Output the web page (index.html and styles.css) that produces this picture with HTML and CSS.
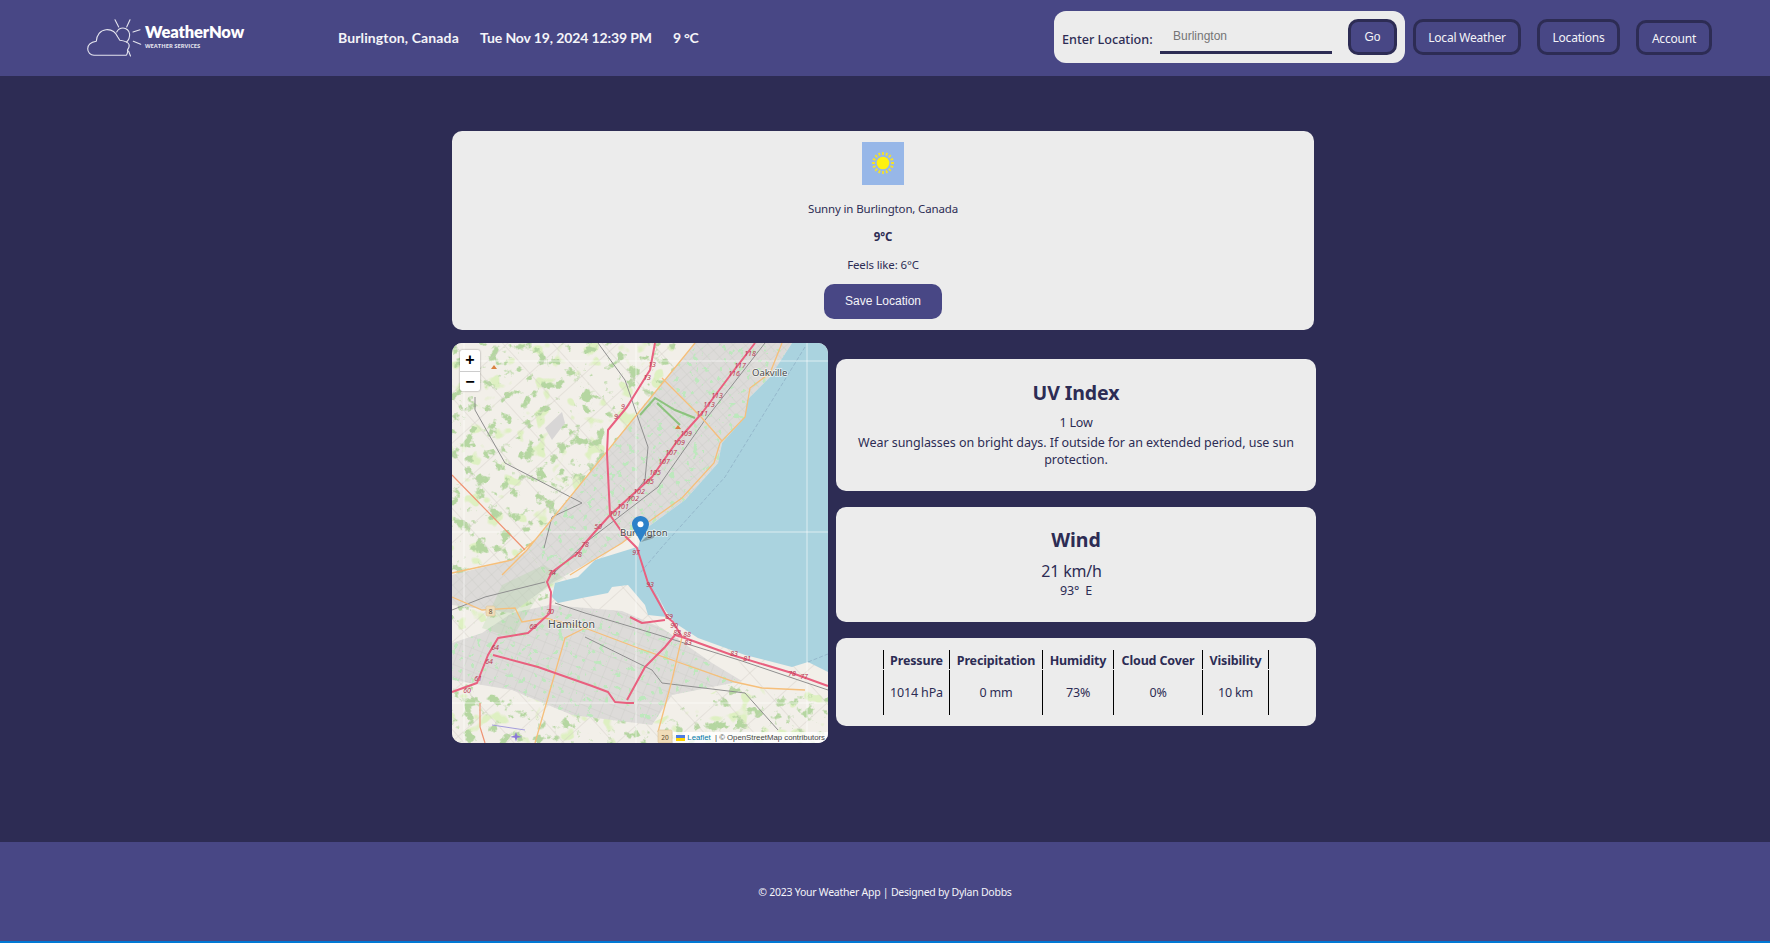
FILE: index.html
```html
<!DOCTYPE html>
<html lang="en">
<head>
<meta charset="utf-8">
<title>WeatherNow</title>
<link rel="stylesheet" href="styles.css">
</head>
<body>
<header class="topbar">
  <a class="logo">
    <svg class="logo-mark" viewBox="16 10 58 40" width="58" height="40" aria-hidden="true">
      <path d="M56 48.300H24c-3.600 0-6.300-3-6.300-6.600 0-3.700 3.300-6.600 8.600-7.500.4-6 3.900-11 9.700-11.500 5.600-.5 9.800 2.800 11.800 7.300l2 3.300c3.500.4 8.300 1.800 9.300 4.300.6 2-.6 3.900-1.700 5.500 1 2-1 5.200-1.400 5.200z" class="logo-line"/>
      <path d="M46.700 25c1.300-2.600 3.800-4 6.300-4 3.400 0 6.300 2.600 6.600 6 .2 3-.8 5.900-3 8" class="logo-line"/>
      <path d="M45 12.700l3.700 7.300M60 12.700l-3.300 7.300M70 22.700l-7 2.300M70.700 37.300l-7.400-3M58.500 44l2 5" class="logo-line"/>
    </svg>
    <span class="logo-text"><strong>WeatherNow</strong><small>WEATHER SERVICES</small></span>
  </a>
  <div class="now">
    <span class="now-place">Burlington, Canada</span>
    <span class="now-date">Tue Nov 19, 2024 12:39 PM</span>
    <span class="now-temp">9 °C</span>
  </div>
  <form class="search">
    <label class="search-label" for="loc">Enter Location:</label>
    <input class="search-input" id="loc" type="text" placeholder="Burlington">
    <button class="btn btn-go" type="button">Go</button>
  </form>
  <nav class="nav">
    <button class="btn btn-nav btn-local" type="button">Local Weather</button>
    <button class="btn btn-nav btn-locs" type="button">Locations</button>
    <button class="btn btn-nav btn-acct" type="button">Account</button>
  </nav>
</header>

<main class="main">
  <div class="wrap">
    <section class="card current">
      <svg class="wx-icon" viewBox="0 0 42 43" width="42" height="43" aria-hidden="true">
        <rect width="42" height="43" class="wx-sky"/>
        <path class="wx-rays" d="M21 10v3M21 29v3M10 21h3M29 21h3M13.200 13.200l2.100 2.100M26.700 26.700l2.100 2.100M28.800 13.200l-2.100 2.100M15.300 26.700l-2.100 2.100M16.800 10.800l1.100 2.800M24.100 28.400l1.100 2.800M25.200 10.800l-1.100 2.800M17.900 28.400l-1.100 2.800M10.800 16.800l2.800 1.100M28.400 24.100l2.800 1.100M31.200 16.800l-2.800 1.100M13.600 24.100l-2.800 1.100"/>
        <circle cx="21" cy="21" r="6.300" class="wx-sun"/>
      </svg>
      <p class="cur-line cur-desc">Sunny in Burlington, Canada</p>
      <p class="cur-line cur-temp">9°C</p>
      <p class="cur-line cur-feels">Feels like: 6°C</p>
      <button class="save" type="button">Save Location</button>
    </section>

    <div class="row">
      <div class="map">
        <svg class="map-art" viewBox="0 0 376 400" width="376" height="400" aria-hidden="true">
          <defs>
            <filter id="blotch" x="0" y="0" width="100%" height="100%" color-interpolation-filters="sRGB">
              <feTurbulence type="fractalNoise" baseFrequency="0.085" numOctaves="4" seed="11"/>
              <feColorMatrix values="0 0 0 0 .71  0 0 0 0 .84  0 0 0 0 .63  9 0 0 0 -5.250"/>
            </filter>
            <filter id="speck" x="0" y="0" width="100%" height="100%" color-interpolation-filters="sRGB">
              <feTurbulence type="fractalNoise" baseFrequency="0.17" numOctaves="3" seed="4"/>
              <feColorMatrix values="0 0 0 0 .74  0 0 0 0 .91  0 0 0 0 .74  14 0 0 0 -8.900"/>
            </filter>
            <filter id="lime" x="0" y="0" width="100%" height="100%" color-interpolation-filters="sRGB">
              <feTurbulence type="fractalNoise" baseFrequency="0.06" numOctaves="2" seed="23"/>
              <feColorMatrix values="0 0 0 0 .87  0 0 0 0 .94  0 0 0 0 .76  12 0 0 0 -7.400"/>
            </filter>
            <filter id="soft"><feGaussianBlur stdDeviation="0.35"/></filter>
            <pattern id="rural" width="37" height="37" patternUnits="userSpaceOnUse" patternTransform="rotate(-42)">
              <path d="M0 0H37M0 0V37" class="grid-rural"/>
            </pattern>
            <pattern id="streets" width="9" height="9" patternUnits="userSpaceOnUse" patternTransform="rotate(-42)">
              <rect width="9" height="9" class="urban-fill"/>
              <path d="M0 0H9M0 0V9" class="grid-street"/>
            </pattern>
            <pattern id="streets2" width="11" height="11" patternUnits="userSpaceOnUse" patternTransform="rotate(22)">
              <rect width="11" height="11" class="urban-fill"/>
              <path d="M0 0H11M0 0V11" class="grid-street"/>
            </pattern>
            <clipPath id="clip-rural"><path d="M0 0H243L75 207 110 250 0 290zM0 340L60 345 120 370 200 380 280 340 376 350V400H0z"/></clipPath>
            <clipPath id="clip-city"><path d="M75 207L243 0H340L318 34 295 57 293 74 270 100 266 120 233 157 196 184 150 212 100 240zM0 300L30 290 60 270 98 262 170 268 210 285 260 320 290 338 220 352 200 382 120 372 60 347 0 337z"/></clipPath>
          </defs>
          <g filter="url(#soft)">
            <rect width="376" height="400" class="land"/>
            <rect width="376" height="400" filter="url(#lime)" clip-path="url(#clip-rural)"/>
            <rect width="376" height="400" filter="url(#blotch)" clip-path="url(#clip-rural)"/>
            <rect width="376" height="400" fill="url(#rural)"/>
            <path d="M75 207L243 0H340L318 34 295 57 293 74 270 100 266 120 233 157 196 184 150 212 100 240z" fill="url(#streets)"/>
            <path d="M0 300L30 290 60 270 98 262 170 268 210 285 260 320 290 338 220 352 200 382 120 372 60 347 0 337z" fill="url(#streets2)"/>
            <path d="M0 232L60 217 75 207 100 240 60 270 0 262z" fill="url(#streets)"/>
            <rect width="376" height="400" filter="url(#speck)" clip-path="url(#clip-city)"/>
            <path d="M60 295L88 250 112 235 92 222 50 242 30 285z" class="green-dark"/>
            <path d="M188 72L203 55 223 67 243 75M228 82L205 60" class="green-deep"/>
            <path d="M93 85L110 69 113 80 100 97z" class="field-grey"/>
            <path d="M340 0H376V329L356 319 340 324 293 312 246 295 223 280 213 267 185 210 188 197 196 184 233 157 266 120 270 100 293 74 295 57 318 34z" class="water"/>
            <path d="M185 204L143 217 126 234 103 240 100 254 106 260 130 255 156 250 160 244 176 242 193 262 196 272 215 274z" class="water"/>
            <path d="M353 4L273 134 210 204 188 230M356 319L376 311" class="ship"/>
            <path d="M12 0V400M184 0V400M355 0V400M0 18H376M0 189H376M0 360H376" class="seams"/>
          </g>
          <g filter="url(#soft)">
            <path d="M313 0L253 77 206 144 133 200 100 232M103 260L133 270 200 290 290 318 376 347M146 0L173 37 196 104 193 137 175 160M0 267L33 254 93 239M23 54V67L53 120 130 160 100 174 92 205M133 294L200 327 210 340 293 350 326 387" class="rail"/>
            <path d="M243 0L75 207 50 232M0 230L60 217 83 197M0 254L30 267 63 265 70 279 93 275 133 285 186 305 283 339 310 345 353 347M83 400L113 295 133 285M206 389L220 337 230 294M330 0L318 30 298 45 293 74 268 100 262 120 230 155 195 180 170 200 145 215 118 232M210 35L250 75 270 98" class="primary"/>
            <path d="M0 132L73 207M28 360V384L33 400" class="trunk"/>
            <path d="M303 0L280 30 250 70 226 97 200 134 158 172 133 200 126 210 100 229 95 239 99 249 98 270 76 290 46 295 36 312 25 340 0 349M203 0L198 27 175 64 156 87 155 110 158 172 172 192 185 205 196 240 215 274 221 279 230 294 280 312 340 330 376 343M41 312L86 324 140 343 156 349 163 359 175 360 182 360M175 357L193 324 213 304 223 292 230 294M178 274L190 280 213 277" class="motorway"/>
            <path d="M40 382L73 387" class="runway"/>
          </g>
          <path d="M39 26l3-4 3 4zM223 86l3-4 3 4z" class="peak"/>
          <g class="exits">
            <text x="298" y="13">118</text><text x="288" y="25">117</text><text x="282" y="33">116</text><text x="265" y="55">113</text><text x="257" y="64">113</text><text x="250" y="73">111</text><text x="234" y="93">109</text><text x="227" y="102">109</text><text x="219" y="112">107</text><text x="212" y="121">107</text><text x="203" y="132">105</text><text x="196" y="141">105</text><text x="187" y="151">102</text><text x="181" y="158">102</text><text x="171" y="166">101</text><text x="163" y="173">101</text><text x="146" y="186">50</text><text x="133" y="204">78</text><text x="126" y="214">78</text><text x="100" y="232">74</text><text x="184" y="212">97</text><text x="198" y="244">93</text><text x="217" y="276">89</text><text x="222" y="285">90</text><text x="225" y="292">88</text><text x="235" y="294">88</text><text x="236" y="302">83</text><text x="282" y="313">83</text><text x="295" y="318">81</text><text x="340" y="333">78</text><text x="352" y="336">77</text><text x="98" y="271">70</text><text x="81" y="286">69</text><text x="43" y="307">64</text><text x="37" y="321">64</text><text x="26" y="338">61</text><text x="15" y="350">60</text><text x="200" y="24">13</text><text x="195" y="37">13</text><text x="171" y="66">9</text><text x="164" y="76">9</text>
          </g>
          <rect x="34" y="263" width="9" height="10" rx="1.500" class="shield"/>
          <text x="38.500" y="271" class="shield-text">8</text>
          <rect x="206" y="387" width="14" height="13" rx="1.500" class="shield"/>
          <text x="213" y="396.500" class="shield-text">20</text>
          <path d="M64 389l1.200 3.500 4.800 1.500-4.800 .7-1.200 3.800-1.200-3.800-4.800-.7 4.800-1.500z" class="plane"/>
          <text x="300" y="33" class="place">Oakville</text>
          <text x="168" y="193" class="place">Burlington</text>
          <text x="96" y="285" class="place place-big">Hamilton</text>
        </svg>
        <div class="zoom-ctl"><span class="zoom-btn">+</span><span class="zoom-btn">−</span></div>
        <svg class="pin" viewBox="0 0 30 28" width="30" height="28" aria-hidden="true">
          <path d="M9 26l7-7 6 .5c1.500 1-.5 2.500-3 3.500z" class="pin-shadow"/>
          <path d="M8.500 0C3.800 0 0 3.700 0 8.300 0 13 6 20 8.500 26 11 20 17 13 17 8.300 17 3.700 13.200 0 8.500 0z" class="pin-body"/>
          <circle cx="8.500" cy="8.300" r="3" class="pin-dot"/>
        </svg>
        <div class="attrib"><svg class="flag" viewBox="0 0 12 8" width="12" height="8" aria-hidden="true"><rect width="12" height="4" class="flag-b"/><rect y="4" width="12" height="4" class="flag-y"/></svg> <span class="attrib-link">Leaflet</span> | © OpenStreetMap contributors</div>
      </div>

      <div class="side">
        <section class="card info info-uv">
          <h2 class="info-title">UV Index</h2>
          <p class="info-text">1 Low</p>
          <p class="info-text info-wide">Wear sunglasses on bright days. If outside for an extended period, use sun protection.</p>
        </section>
        <section class="card info info-wind">
          <h2 class="info-title">Wind</h2>
          <p class="wind-speed">21 km/h</p>
          <p class="info-text">93°&nbsp; E</p>
        </section>
        <section class="card stats">
          <table class="stat-table">
            <colgroup><col class="c1"><col class="c2"><col class="c3"><col class="c4"><col class="c5"></colgroup>
            <thead>
              <tr><th>Pressure</th><th>Precipitation</th><th>Humidity</th><th>Cloud Cover</th><th>Visibility</th></tr>
            </thead>
            <tbody>
              <tr><td>1014 hPa</td><td>0 mm</td><td>73%</td><td>0%</td><td>10 km</td></tr>
            </tbody>
          </table>
        </section>
      </div>
    </div>
  </div>
</main>

<footer class="footer">© 2023 Your Weather App | Designed by Dylan Dobbs</footer>
</body>
</html>
```
FILE: styles.css
```css
* { box-sizing: border-box; }
html, body { height: 100%; }
body {
  margin: 0;
  height: 943px;
  overflow: hidden;
  display: flex;
  flex-direction: column;
  background: #2d2c54;
  color: #2d2c54;
  font-family: "Noto Sans", "Open Sans", sans-serif;
  font-size: 13px;
}

/* header */
.topbar {
  flex: none;
  height: 76px;
  background: #484785;
  display: flex;
  align-items: center;
  padding: 0 58px 2px 87px;
}
.logo { display: flex; align-items: center; width: 251px; color: #fff; margin-top: -1px; }
.logo-mark { display: block; margin-left: -1px; margin-right: 1px; }
.logo-line { fill: none; stroke: #e4e4ee; stroke-width: 1.100; stroke-linecap: round; stroke-linejoin: round; }
.logo-text { display: flex; flex-direction: column; margin-top: 1px; }
.logo-text strong { font: 800 16.500px/19px "Lato", sans-serif; letter-spacing: -.1px; }
.logo-text small { font: 700 5.800px/9px "Open Sans", sans-serif; color: #e4e4ee; }
.now {
  display: flex;
  color: #f4f4f8;
  font: 700 14px/20px "Lato", sans-serif;
  margin-top: 2px;
}
.now-place { width: 142px; letter-spacing: .12px; }
.now-date { width: 193px; letter-spacing: -.12px; }
.now-temp { letter-spacing: -.3px; }
.search {
  margin-left: auto;
  width: 351px;
  height: 52px;
  background: #ececec;
  border-radius: 12px;
  display: flex;
  align-items: center;
  padding: 0 8px;
}
.search-label { width: 98px; font-size: 12.600px; font-weight: 500; margin-top: 4px; color: #2d2c54; }
.search-input {
  width: 172px;
  height: 36px;
  margin-bottom: 2px;
  border: 0;
  border-bottom: 3px solid #2d2c54;
  background: transparent;
  padding: 3px 13px 0;
  font: 12px "Liberation Sans", sans-serif;
  outline: none;
}
.search-input::placeholder { color: #757575; opacity: 1; }
.btn {
  height: 36px;
  background: #484785;
  color: #f4f4f8;
  border: 3px solid #2d2c54;
  border-radius: 10px;
  font: 12px "Noto Sans", sans-serif;
  letter-spacing: -.2px;
  padding: 0;
}
.btn-go { width: 49px; margin-left: 16px; font-family: "Liberation Sans", sans-serif; letter-spacing: 0; }
.nav { display: flex; margin-left: 8px; }
.btn-nav { margin: 0; }
.btn-local { width: 108px; }
.btn-locs { width: 83px; margin-left: 16px; }
.btn-acct { width: 76px; margin-left: 16px; height: 35px; margin-top: 1px; padding-top: 2px; }

/* layout */
.main { flex: 1; padding-top: 55px; }
.wrap { width: 866px; margin: 0 auto; }
.card { background: #ececec; border-radius: 10px; }
.current {
  width: 862px;
  height: 199px;
  padding-top: 11px;
  display: flex;
  flex-direction: column;
  align-items: center;
}
.wx-icon { display: block; }
.wx-sky { fill: #97b7e8; }
.wx-rays { stroke: #f5e12b; stroke-width: 1.800; fill: none; }
.wx-sun { fill: #fff10f; }
.cur-line { margin: 0; font-size: 11.500px; line-height: 16px; letter-spacing: -.15px; }
.cur-desc { margin-top: 16px; }
.cur-temp { margin-top: 12px; font-weight: 700; }
.cur-feels { margin-top: 12px; }
.save {
  margin-top: 11px;
  width: 118px;
  height: 35px;
  border: 0;
  border-radius: 10px;
  background: #484785;
  color: #f4f4f8;
  font: 12px "Liberation Sans", sans-serif;
  padding: 0 0 2px;
}
.row { display: flex; margin-top: 13px; }

/* map */
.map {
  position: relative;
  flex: none;
  width: 376px;
  height: 400px;
  overflow: hidden;
  border-radius: 10px;
  background: #f2efe9;
}
.map-art { display: block; }
.land { fill: #f2efe9; }
.water { fill: #aad3df; }
.urban-fill { fill: #dddbd9; }
.grid-rural { stroke: #cfcac4; stroke-width: .8; fill: none; }
.grid-street { stroke: #c6c4c2; stroke-width: .6; fill: none; }
.green-dark { fill: #a9d29a; opacity: .25; }
.green-deep { fill: none; stroke: #8dc27e; stroke-width: 2; }
.field-grey { fill: #d8d6d6; }
.ship { fill: none; stroke: #8fb1c6; stroke-width: .8; stroke-dasharray: 4 2; }
.seams { fill: none; stroke: rgba(255,255,255,.6); stroke-width: 1; }
.rail { fill: none; stroke: #8f8f8f; stroke-width: 1; }
.primary { fill: none; stroke: #f6bf7a; stroke-width: 1.300; }
.trunk { fill: none; stroke: #ef9272; stroke-width: 1.200; }
.motorway { fill: none; stroke: #e9607f; stroke-width: 2; stroke-linejoin: round; }
.runway { fill: none; stroke: #a49ddd; stroke-width: 1; }
.peak { fill: #d9813f; }
.exits text { font: italic 7px "Noto Sans", sans-serif; fill: #b83a52; text-anchor: middle; }
.shield { fill: #f0dcb8; stroke: #dcc298; stroke-width: .6; }
.shield-text { font: 6.500px "Noto Sans", sans-serif; fill: #5a4a30; text-anchor: middle; }
.plane { fill: #8a78d8; }
.place { font: 9.500px "Noto Sans", sans-serif; fill: #4a4a4a; paint-order: stroke; stroke: rgba(255,255,255,.65); stroke-width: 1.500px; }
.place-big { font-size: 10.500px; letter-spacing: .2px; }
.zoom-ctl {
  position: absolute;
  left: 8px;
  top: 7px;
  width: 20px;
  background: #fff;
  border-radius: 2px;
  box-shadow: 0 0 2px rgba(0,0,0,.45);
}
.zoom-btn {
  display: block;
  height: 20.500px;
  text-align: center;
  color: #000;
  font: 700 16px/20px "Liberation Sans", sans-serif;
}
.zoom-btn + .zoom-btn { border-top: 1px solid #ccc; }
.pin { position: absolute; left: 180px; top: 173px; display: block; }
.pin-body { fill: #2c81c9; }
.pin-dot { fill: #fff; }
.pin-shadow { fill: rgba(40,40,40,.3); }
.attrib {
  position: absolute;
  right: 0;
  bottom: 0;
  height: 11px;
  padding: 0 3px;
  display: flex;
  align-items: center;
  gap: 2px;
  background: rgba(255,255,255,.8);
  color: #444;
  font: 7.800px/11px "Liberation Sans", sans-serif;
  white-space: pre;
}
.flag { width: 9px; height: 6px; flex: none; }
.flag-b { fill: #4c7be1; }
.flag-y { fill: #ffd500; }
.attrib-link { color: #0078a8; }

/* side cards */
.side { flex: none; width: 480px; margin-left: 8px; padding-top: 16px; display: flex; flex-direction: column; gap: 16px; }
.info { text-align: center; padding: 0 18px; }
.info-uv { height: 132px; padding-top: 20px; }
.info-wind { height: 115px; padding-top: 19px; }
.info-title { margin: 0; font-size: 19.500px; line-height: 28px; font-weight: 700; letter-spacing: -.1px; }
.info-text { margin: 0; font-size: 12.500px; line-height: 17.500px; letter-spacing: -.17px; }
.info-uv .info-text:first-of-type { margin-top: 7px; margin-bottom: 2px; }
.info-wide { letter-spacing: -.04px; }
.wind-speed { margin: 6px 9px 0 0; font-size: 16px; line-height: 22px; letter-spacing: -.2px; }
.stats { height: 88px; padding-top: 11px; display: flex; justify-content: center; }
.stat-table { border-collapse: separate; border-spacing: 0 1px; table-layout: fixed; width: 386px; height: 67px; }
.c1 { width: 66px; } .c2 { width: 93px; } .c3 { width: 71px; } .c4 { width: 89px; } .c5 { width: 67px; }
.stat-table th, .stat-table td {
  border-left: 1px solid #000;
  padding: 0;
  text-align: center;
  font-size: 12.500px;
  letter-spacing: -.15px;
  white-space: nowrap;
}
.stat-table th { height: 19px; font-weight: 700; line-height: 17px; padding-top: 1px; }
.stat-table th:last-child, .stat-table td:last-child { border-right: 1px solid #000; }

/* footer */
.footer {
  flex: none;
  height: 101px;
  background: #484785;
  border-bottom: 2px solid #0078d4;
  color: #f4f4f8;
  text-align: center;
  font-size: 10.500px;
  line-height: 100px;
  letter-spacing: -.25px;
}
```
